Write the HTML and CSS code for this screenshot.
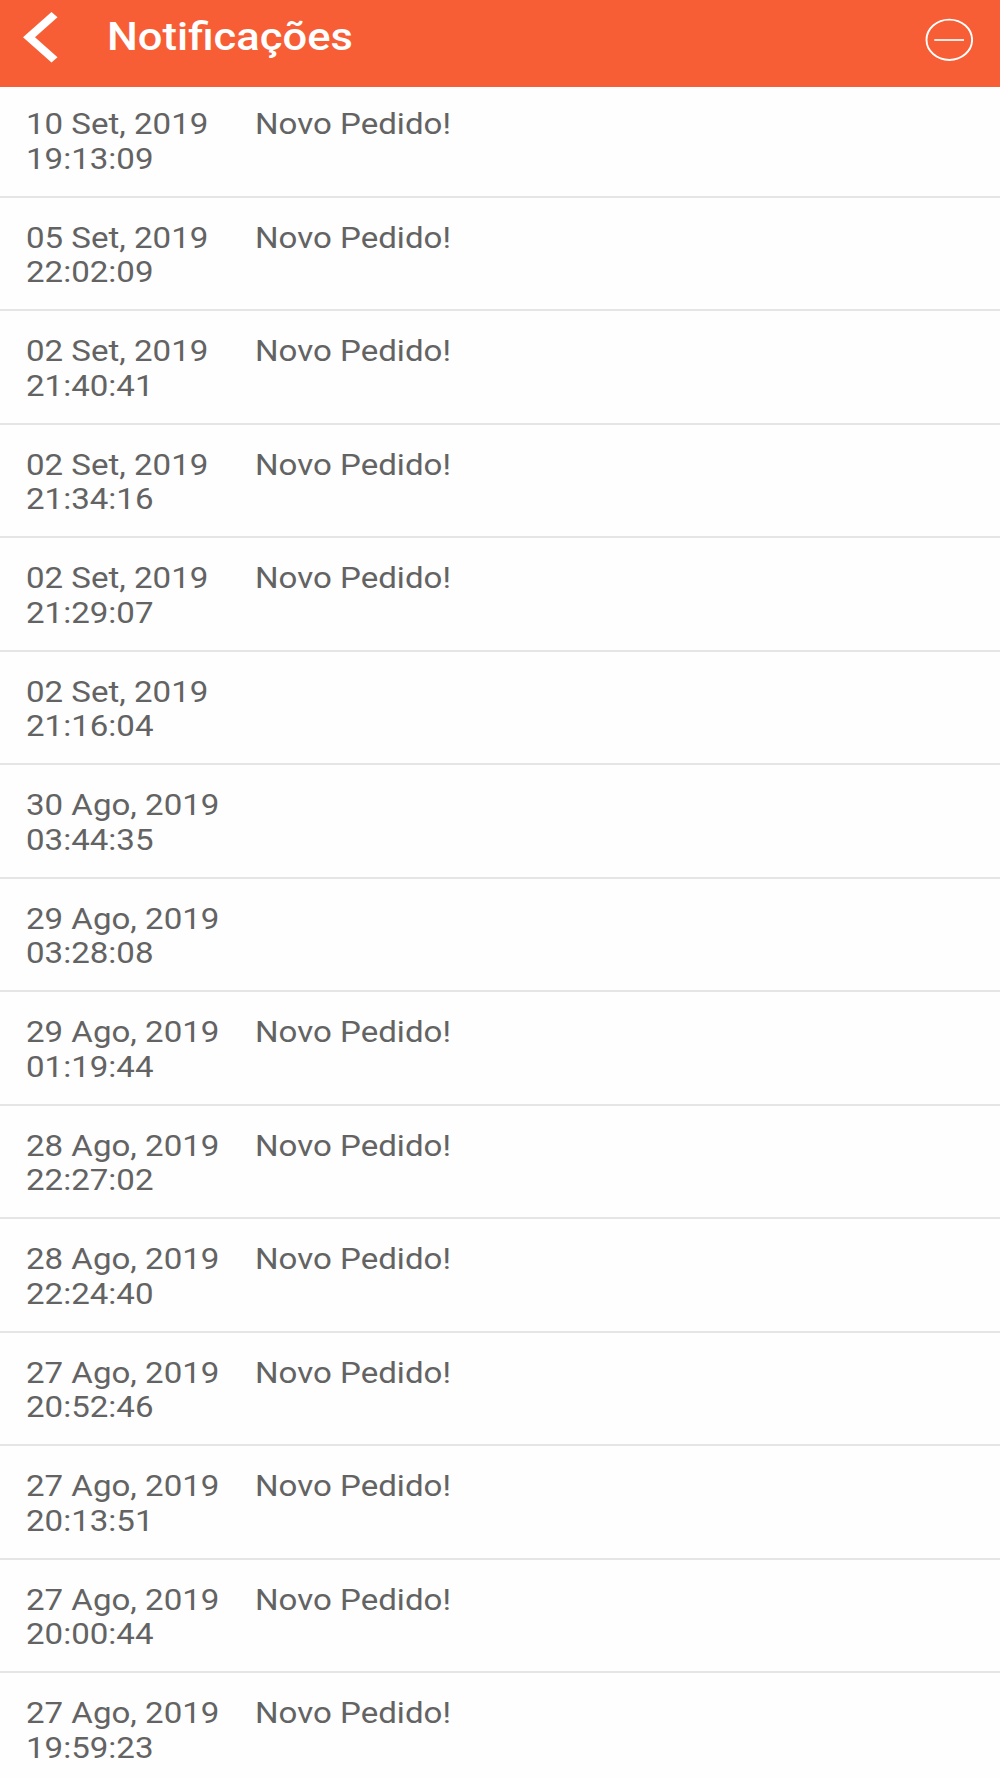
FILE: index.html
```html
<!doctype html>
<html lang="pt-BR">
<head>
    <meta charset="UTF-8">
    <meta name="viewport" content="width=device-width, initial-scale=1.0">
    <title>Notificações</title>
    <link rel="stylesheet" href="styles.css">
</head>
<body>
    <header class="topbar">
        <svg class="back_icon" viewBox="0 0 35 51" width="35" height="51">
            <path d="M28.5 0 L34.5 5.2 L12 25.2 L34.5 45.2 L28.5 50.6 L0 25.2 Z" fill="#fff"/>
        </svg>
        <h1 class="title">Notificações</h1>
        <svg class="clear_icon" viewBox="0 0 48 44" width="48" height="44">
            <ellipse cx="24.3" cy="21.8" rx="22.8" ry="20.2" fill="none" stroke="#fff" stroke-width="1.9"/>
            <path d="M9.3 22 H39" stroke="#fff" stroke-width="1.7"/>
        </svg>
    </header>
    <main class="list">
        <div class="item"><div class="date">10 Set, 2019<br>19:13:09</div><div class="message">Novo Pedido!</div></div>
        <div class="item"><div class="date">05 Set, 2019<br>22:02:09</div><div class="message">Novo Pedido!</div></div>
        <div class="item"><div class="date">02 Set, 2019<br>21:40:41</div><div class="message">Novo Pedido!</div></div>
        <div class="item"><div class="date">02 Set, 2019<br>21:34:16</div><div class="message">Novo Pedido!</div></div>
        <div class="item"><div class="date">02 Set, 2019<br>21:29:07</div><div class="message">Novo Pedido!</div></div>
        <div class="item"><div class="date">02 Set, 2019<br>21:16:04</div></div>
        <div class="item"><div class="date">30 Ago, 2019<br>03:44:35</div></div>
        <div class="item"><div class="date">29 Ago, 2019<br>03:28:08</div></div>
        <div class="item"><div class="date">29 Ago, 2019<br>01:19:44</div><div class="message">Novo Pedido!</div></div>
        <div class="item"><div class="date">28 Ago, 2019<br>22:27:02</div><div class="message">Novo Pedido!</div></div>
        <div class="item"><div class="date">28 Ago, 2019<br>22:24:40</div><div class="message">Novo Pedido!</div></div>
        <div class="item"><div class="date">27 Ago, 2019<br>20:52:46</div><div class="message">Novo Pedido!</div></div>
        <div class="item"><div class="date">27 Ago, 2019<br>20:13:51</div><div class="message">Novo Pedido!</div></div>
        <div class="item"><div class="date">27 Ago, 2019<br>20:00:44</div><div class="message">Novo Pedido!</div></div>
        <div class="item"><div class="date">27 Ago, 2019<br>19:59:23</div><div class="message">Novo Pedido!</div></div>
    </main>
</body>
</html>
```

FILE: styles.css
```css
* {
    box-sizing: border-box;
}

body {
    font-family: Roboto, sans-serif;
    margin: 0;
    height: 1778px;
    overflow: hidden;
    background: #fefefe;
    color: #636363;
}

.topbar {
    display: flex;
    align-items: flex-start;
    justify-content: space-between;
    height: 86.6px;
    padding: 12px 27px 0 23px;
    background: #f85e35;
    color: #fff;
}

.title {
    margin: 3px auto 0 49px;
    font-size: 38px;
    font-weight: 500;
    line-height: 44px;
    white-space: nowrap;
    transform: scaleX(1.145);
    transform-origin: left;
}

.clear_icon {
    margin-top: 6px;
}

.item {
    display: grid;
    grid-template-columns: 229px 220px;
    height: 113.5px;
    padding: 23px 0 0 25.6px;
    border-bottom: 2px solid #e5e5e5;
    font-size: 29px;
    line-height: 34.4px;
}

.item:first-child {
    height: 111.4px;
    padding-top: 20.9px;
}

.date,
.message {
    white-space: nowrap;
    transform: scaleX(1.14);
    transform-origin: left;
}
```
